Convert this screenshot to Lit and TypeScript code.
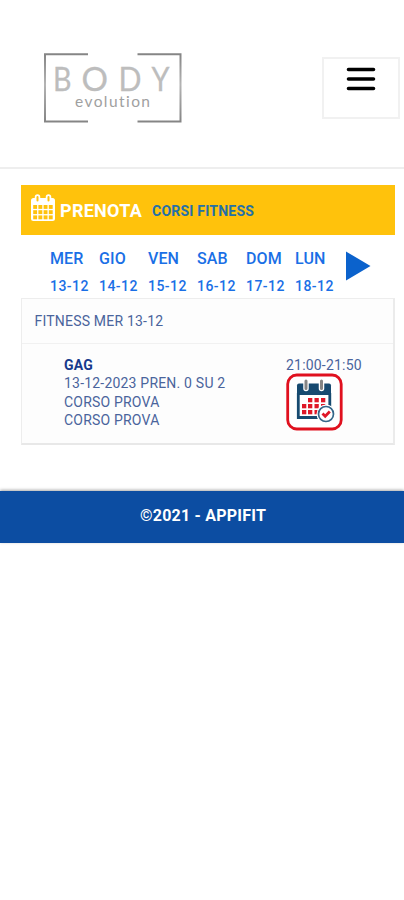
import { LitElement, html, svg, css } from "lit";
import { customElement } from "lit/decorators.js";

const DAYS = [
  ["MER", "13-12"],
  ["GIO", "14-12"],
  ["VEN", "15-12"],
  ["SAB", "16-12"],
  ["DOM", "17-12"],
  ["LUN", "18-12"],
];

@customElement("site-header")
class SiteHeader extends LitElement {
  static styles = css`
    :host {
      display: flex;
      justify-content: space-between;
      align-items: flex-start;
      box-sizing: border-box;
      height: 169px;
      padding: 52px 4px 0 43px;
      border-bottom: 2px solid #eeeeee;
    }
    .logo { display: block; }
    .small { font-variant-ligatures: none; }
    .menu {
      display: flex;
      justify-content: center;
      box-sizing: border-box;
      width: 78px;
      height: 62px;
      margin-top: 5px;
      padding: 8px 0 0;
      border: 2px solid #f1f1f1;
      background: #fff;
    }
    .menu svg { display: block; }
  `;
  render() {
    return html`
      <svg class="logo" width="140" height="72" viewBox="0 0 140 72">
        <defs>
          <linearGradient id="metal" x1="0" y1="0" x2="0" y2="1">
            <stop offset="0" stop-color="#858585" />
            <stop offset=".45" stop-color="#b4b4b4" />
            <stop offset="1" stop-color="#858585" />
          </linearGradient>
        </defs>
        <path d="M45 2.300H2V69.500H45M94.500 2.300H137.500V69.500H94.500" fill="none" stroke="url(#metal)" stroke-width="2" />
        <g font-family="Lato, sans-serif" font-size="32.500" fill="#bdbdbd" stroke="#bdbdbd" stroke-width=".3">
          <text x="10" y="39" textLength="18.500" lengthAdjust="spacingAndGlyphs">B</text>
          <text x="38.500" y="39" textLength="26.500" lengthAdjust="spacingAndGlyphs">O</text>
          <text x="75.500" y="39" textLength="23" lengthAdjust="spacingAndGlyphs">D</text>
          <text x="108.500" y="39" textLength="18" lengthAdjust="spacingAndGlyphs">Y</text>
        </g>
        <text class="small" x="32" y="55" font-family="Lato, sans-serif" font-size="15.500" fill="#a0a0a0" textLength="75">evolution</text>
      </svg>
      <div class="menu">
        <svg width="30" height="26" viewBox="0 0 30 26">
          <path d="M2.500 2.500H27.500M2.500 12H27.500M2.500 21.500H27.500" stroke="#000" stroke-width="3.600" stroke-linecap="round" />
        </svg>
      </div>
    `;
  }
}

@customElement("booking-banner")
class BookingBanner extends LitElement {
  static styles = css`
    :host {
      display: flex;
      box-sizing: border-box;
      height: 50px;
      padding-left: 9px;
      background: #ffc20c;
      white-space: nowrap;
    }
    .icon { display: block; margin-top: 9px; }
    .title {
      margin-left: 4px;
      font: 700 18px/51px Roboto, sans-serif;
      letter-spacing: 0.28px;
      color: #fff;
      width: 92px;
    }
    .sub {
      font: 700 14px/53px Roboto, sans-serif;
      letter-spacing: 0.22px;
      color: #2470a8;
    }
  `;
  render() {
    return html`
      <svg class="icon" width="26" height="28" viewBox="0 0 26 28">
        <rect x="1" y="4" width="24" height="23" rx="2.500" fill="#fff" />
        <path d="M7.500 3V7M18.500 3V7" stroke="#fff" stroke-width="5.500" stroke-linecap="round" />
        <path d="M7.500 3V6.500M18.500 3V6.500" stroke="#ffc20c" stroke-width="2" stroke-linecap="round" />
        <g fill="#ffc20c">
          ${[11, 16.2, 21.4].map((y) =>
            [3.2, 8.4, 13.6, 18.8].map((x) => svg`<rect x=${x} y=${y} width="3.900" height="3.900" />`)
          )}
        </g>
      </svg>
      <span class="title">PRENOTA</span>
      <span class="sub">CORSI FITNESS</span>
    `;
  }
}

@customElement("day-picker")
class DayPicker extends LitElement {
  static styles = css`
    :host {
      display: flex;
      height: 63px;
      padding-left: 29px;
      font-family: Roboto, sans-serif;
      font-weight: 500;
      color: #1a6fe6;
    }
    .day { width: 49px; white-space: nowrap; }
    .name { font-size: 16px; line-height: 27px; padding-top: 10px; letter-spacing: 0.1px; }
    .date { font-size: 14px; line-height: 28px; letter-spacing: 0.45px; }
    .next { display: block; margin: 16px 0 0 1px; }
  `;
  render() {
    return html`
      ${DAYS.map(
        ([name, date]) => html`<div class="day">
          <div class="name">${name}</div>
          <div class="date">${date}</div>
        </div>`
      )}
      <svg class="next" width="26" height="30" viewBox="0 0 26 30">
        <path d="M1 0.500L25.500 15L1 29.500Z" fill="#0b62cc" />
      </svg>
    `;
  }
}

@customElement("course-card")
class CourseCard extends LitElement {
  static styles = css`
    :host {
      display: block;
      box-sizing: border-box;
      height: 147px;
      border: 1px solid #ededed;
      border-right: 2px solid #ebebeb;
      border-bottom: 2px solid #e8e8e8;
      background: #fdfdfd;
      font: 400 14px/18.6px Roboto, sans-serif;
      letter-spacing: 0.2px;
      color: #4a649c;
      white-space: nowrap;
    }
    .head {
      box-sizing: border-box;
      height: 45px;
      padding-left: 12.500px;
      line-height: 44px;
      border-bottom: 1px solid #f1f1f1;
    }
    .body {
      display: flex;
      padding: 11.600px 0 0 42px;
    }
    .info { width: 222px; }
    .name { font-weight: 700; color: #173a8c; }
    .book { display: block; margin-top: -1px; }
  `;
  render() {
    return html`
      <div class="head">FITNESS MER 13-12</div>
      <div class="body">
        <div class="info">
          <div class="name">GAG</div>
          <div class="when">13-12-2023 PREN. 0 SU 2</div>
          <div class="line">CORSO PROVA</div>
          <div class="line">CORSO PROVA</div>
        </div>
        <div class="slot">
          <div class="time">21:00-21:50</div>
          <svg class="book" width="57" height="58" viewBox="0 0 57 58">
            <rect x="1.700" y="2" width="53.500" height="54" rx="9" fill="#fff" stroke="#e0101e" stroke-width="2.800" />
            <path d="M11 22V12.500Q11 10.500 13 10.500H43Q45 10.500 45 12.500V22Z" fill="#174a70" />
            <path d="M12.300 20V44.500H33M43.800 20V34" fill="none" stroke="#174a70" stroke-width="2.800" />
            <path d="M20 8.500V15.500M35.500 8.500V15.500" stroke="#fff" stroke-width="5.500" stroke-linecap="round" />
            <path d="M20 8V15.500M35.500 8V15.500" stroke="#858585" stroke-width="3" stroke-linecap="round" />
            <g fill="#df1727">
              ${[[22, 25], [28.5, 25], [35, 25], [16, 31], [22, 31], [28.5, 31], [35, 31], [16, 37], [22, 37], [28.5, 37]].map(
                ([x, y]) => svg`<rect x=${x} y=${y} width="4.300" height="4.300" />`
              )}
            </g>
            <circle cx="40" cy="41" r="9.500" fill="#fff" />
            <circle cx="40" cy="41" r="7.500" fill="#fff" stroke="#35678a" stroke-width="1.700" />
            <path d="M36.500 40.500L39.200 43.200L43.800 38.500" fill="none" stroke="#df1727" stroke-width="2.800" />
          </svg>
        </div>
      </div>
    `;
  }
}

@customElement("app-root")
class AppRoot extends LitElement {
  static styles = css`
    :host {
      display: block;
      width: 404px;
      height: 900px;
      overflow: hidden;
      background: #fff;
    }
    .main {
      box-sizing: border-box;
      height: 322px;
      padding: 16px 9px 0 21px;
    }
    .footer {
      height: 52px;
      background: #0c4da2;
      box-shadow: 0 -1px 3px rgba(0, 0, 0, 0.35);
      color: #fff;
      text-align: center;
      font: 700 16px/49px Roboto, sans-serif;
      letter-spacing: 0.22px;
      padding-left: 2px;
      box-sizing: border-box;
    }
  `;
  render() {
    return html`
      <site-header></site-header>
      <div class="main">
        <booking-banner></booking-banner>
        <day-picker></day-picker>
        <course-card></course-card>
      </div>
      <div class="footer">©2021 - APPIFIT</div>
    `;
  }
}
